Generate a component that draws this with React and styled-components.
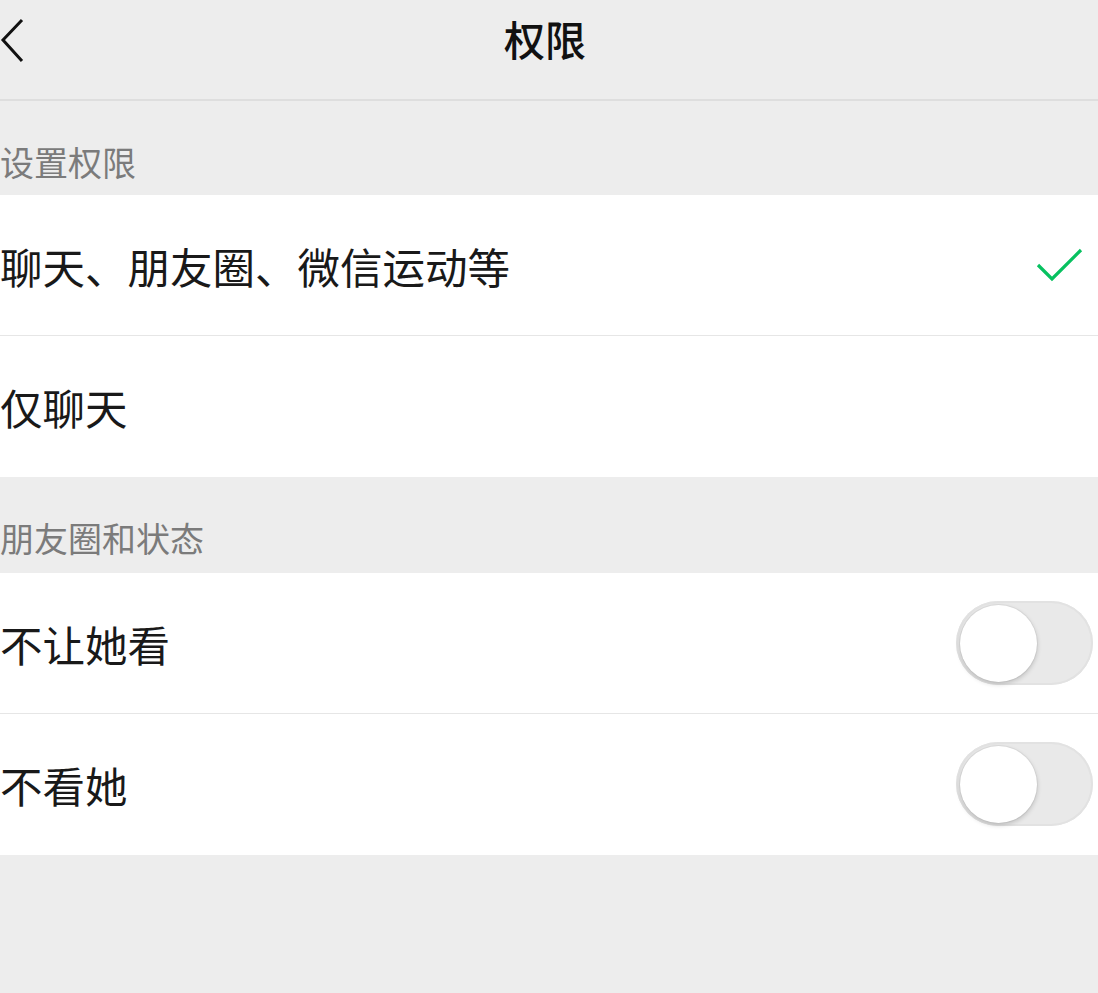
import React from 'react';
import styled, { createGlobalStyle } from 'styled-components';

const Global = createGlobalStyle`
  html, body {
    margin: 0;
    padding: 0;
    background: #ededed;
    font-family: "Noto Sans CJK SC", "Noto Sans", sans-serif;
  }
`;

const Page = styled.div`
  width: 1098px;
  min-height: 993px;
  background: #ededed;
`;

const Header = styled.header`
  position: relative;
  height: 99px;
  display: flex;
  align-items: center;
  justify-content: center;
  border-bottom: 2px solid #dedede;
`;

const BackButton = styled.div`
  position: absolute;
  left: 0;
  top: 17px;
  width: 28px;
  height: 46px;
  display: flex;
  align-items: center;
`;

const Title = styled.h1`
  margin: -24px 0 0 -8px;
  font-size: 41px;
  font-weight: 500;
  color: #111;
`;

const SectionLabel = styled.div`
  height: ${p => p.h}px;
  display: flex;
  align-items: flex-end;
  padding-bottom: ${p => p.pb}px;
  box-sizing: border-box;
  font-size: 34px;
  color: #7b7b7b;
  line-height: 1;
`;

const Group = styled.div`
  background: #fff;
`;

const Row = styled.div`
  height: 140px;
  display: flex;
  align-items: center;
  justify-content: space-between;
  font-size: 42.5px;
  color: #191919;
  border-bottom: 1px solid ${p => (p.last ? '#fff' : '#e6e6e6')};
  padding-right: 6px;
`;

const Toggle = styled.div`
  width: 137px;
  height: 84px;
  border-radius: 42px;
  background: #e9e9e9;
  box-shadow: inset 0 0 0 2px #e2e2e2;
  display: flex;
  align-items: center;
  padding-left: 4px;
  box-sizing: border-box;
  margin-right: -1px;
`;

const Knob = styled.div`
  width: 77px;
  height: 77px;
  border-radius: 50%;
  background: #fff;
  box-shadow: 0 2px 5px rgba(0, 0, 0, 0.2), 0 0 0 1px rgba(0, 0, 0, 0.04);
`;

const Check = () => (
  <svg width="50" height="40" viewBox="0 0 50 40" style={{ marginRight: 8 }}>
    <polyline points="4,20 18,34 47,5" fill="none" stroke="#07c160" strokeWidth="3.2" />
  </svg>
);

export default function App() {
  return (
    <Page>
      <Global />
      <Header>
        <BackButton>
          <svg width="26" height="46" viewBox="0 0 26 46">
            <polyline points="22,3 3,23 22,44" fill="none" stroke="#111" strokeWidth="3" />
          </svg>
        </BackButton>
        <Title>权限</Title>
      </Header>
      <SectionLabel h={94} pb={16}>设置权限</SectionLabel>
      <Group>
        <Row>
          聊天、朋友圈、微信运动等
          <Check />
        </Row>
        <Row last>仅聊天</Row>
      </Group>
      <SectionLabel h={96} pb={18}>朋友圈和状态</SectionLabel>
      <Group>
        <Row>
          不让她看
          <Toggle><Knob /></Toggle>
        </Row>
        <Row last>
          不看她
          <Toggle><Knob /></Toggle>
        </Row>
      </Group>
    </Page>
  );
}
